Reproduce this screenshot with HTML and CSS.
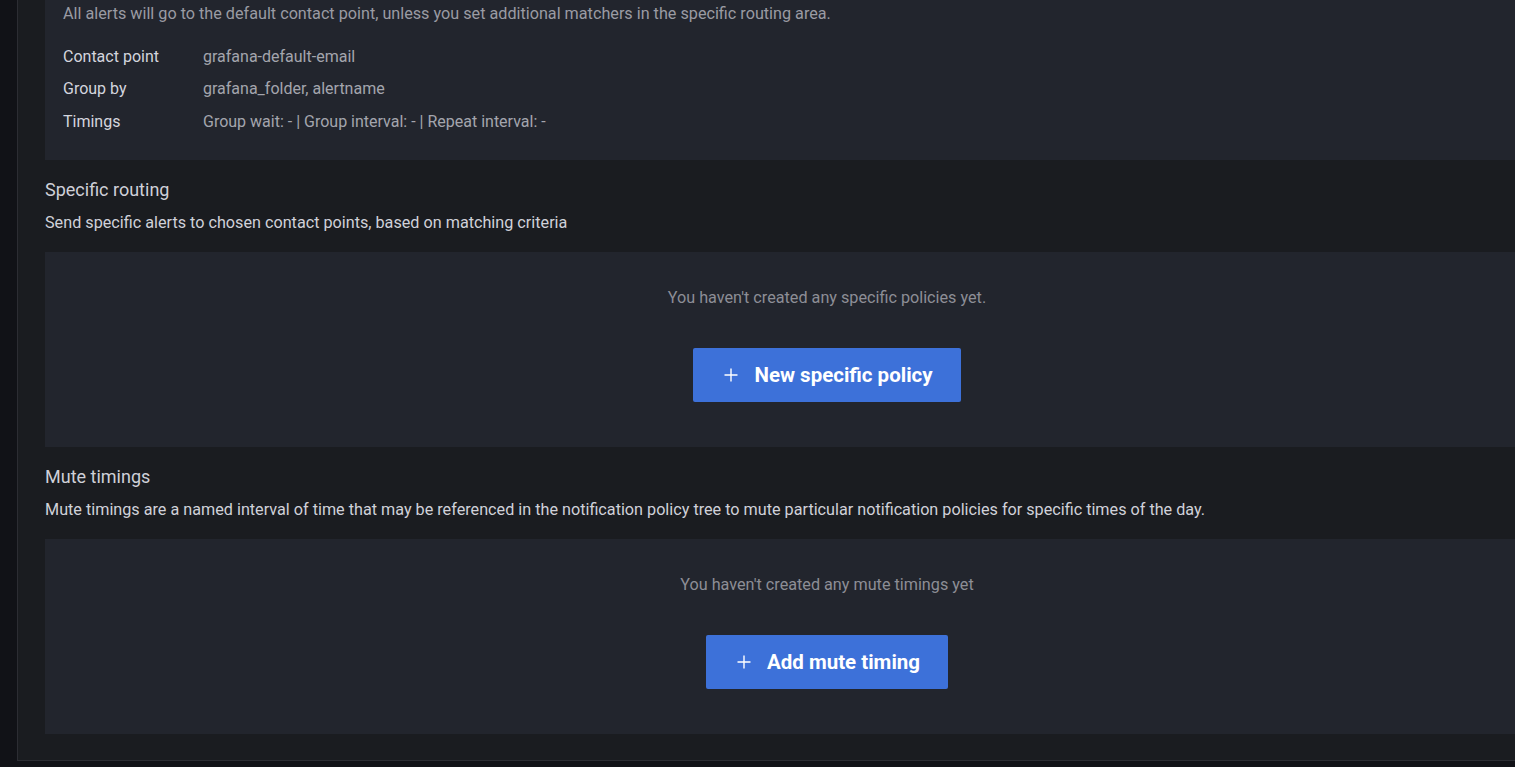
FILE: index.html
```html
<!DOCTYPE html>
<html lang="en">
<head>
    <meta charset="UTF-8">
    <title>Notification policies</title>
    <link rel="stylesheet" href="styles.css">
</head>
<body>
    <div class="panel">
        <div class="box default-policy">
            <p class="intro">All alerts will go to the default contact point, unless you set additional matchers in the specific routing area.</p>
            <div class="row"><span class="label">Contact point</span><span class="value">grafana-default-email</span></div>
            <div class="row"><span class="label">Group by</span><span class="value">grafana_folder, alertname</span></div>
            <div class="row"><span class="label">Timings</span><span class="value">Group wait: - | Group interval: - | Repeat interval: -</span></div>
        </div>

        <h3 class="title">Specific routing</h3>
        <p class="desc">Send specific alerts to chosen contact points, based on matching criteria</p>
        <div class="box empty">
            <p class="empty-text">You haven't created any specific policies yet.</p>
            <button class="btn">
                <svg width="16" height="16" viewBox="0 0 16 16"><path d="M8 1.5v13M1.5 8h13" stroke="#fff" stroke-width="1.4" fill="none"/></svg>
                New specific policy
            </button>
        </div>

        <h3 class="title">Mute timings</h3>
        <p class="desc">Mute timings are a named interval of time that may be referenced in the notification policy tree to mute particular notification policies for specific times of the day.</p>
        <div class="box empty">
            <p class="empty-text">You haven't created any mute timings yet</p>
            <button class="btn">
                <svg width="16" height="16" viewBox="0 0 16 16"><path d="M8 1.5v13M1.5 8h13" stroke="#fff" stroke-width="1.4" fill="none"/></svg>
                Add mute timing
            </button>
        </div>
    </div>
</body>
</html>
```

FILE: styles.css
```css
body, html {
    margin: 0;
    padding: 0;
    height: 100%;
    overflow: hidden;
    background: #111217;
    font-family: Roboto, "Liberation Sans", sans-serif;
    color: #ccccdc;
}

.panel {
    margin-left: 17px;
    width: 1619px;
    height: 761px;
    padding: 0 27px 0 27px;
    box-sizing: border-box;
    background: #1a1c20;
    border-left: 1px solid #2c2d33;
    border-bottom: 1px solid #2c2d33;
}

.box {
    background: #22252d;
}

.default-policy {
    padding: 3px 18px 22px 18px;
}

.intro {
    margin: 0 0 15px 0;
    font-size: 16.2px;
    line-height: 22px;
    color: #9a9ba3;
}

.row {
    display: flex;
    height: 32.5px;
    align-items: center;
    font-size: 16px;
}

.label {
    width: 140px;
    color: #d4d5de;
}

.value {
    color: #a4a5ad;
}

.title {
    margin: 18px 0 0 0;
    font-size: 18px;
    font-weight: 400;
    line-height: 24px;
    color: #cfd0d8;
}

.desc {
    margin: 10px 0 18px 0;
    font-size: 16.2px;
    line-height: 22px;
    color: #d0d1d9;
}

.empty {
    display: flex;
    flex-direction: column;
    align-items: center;
    padding: 35px 0 45px 0;
}

.empty-text {
    margin: 0 0 39px 0;
    font-size: 16.2px;
    line-height: 22px;
    color: #8d8e96;
}

.btn {
    display: flex;
    align-items: center;
    gap: 15px;
    height: 54px;
    padding: 0 28px 0 30px;
    border: none;
    border-radius: 2px;
    background: #3d71d9;
    color: #fff;
    font-family: Roboto, "Liberation Sans", sans-serif;
    font-size: 20.5px;
    font-weight: 700;
    cursor: pointer;
}
```
